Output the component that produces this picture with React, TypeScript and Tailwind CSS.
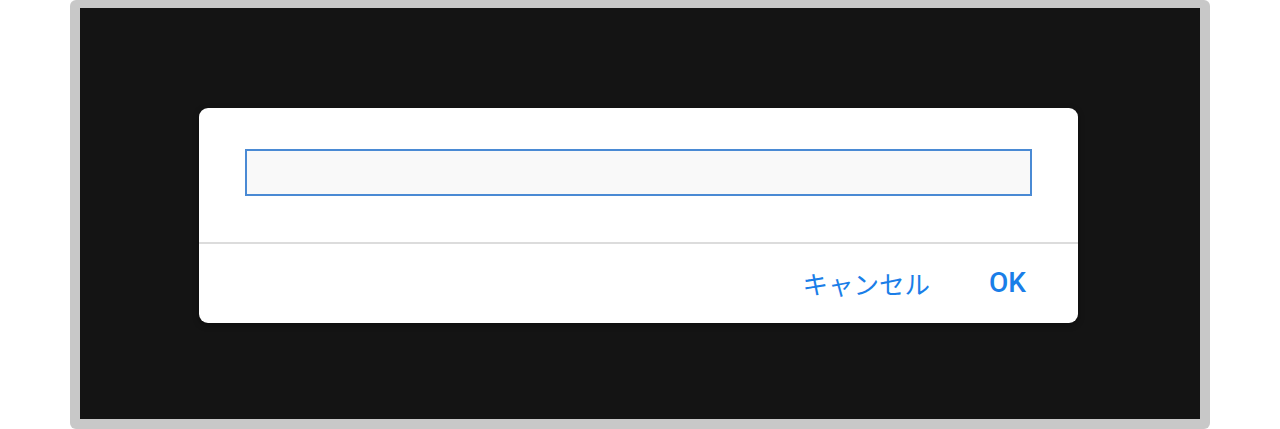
export default function App() {
  return (
    <div className="h-[429px] w-[1280px] bg-white">
      <div className="ml-[70px] h-[429px] w-[1140px] rounded-[6px] bg-[#c8c8c8] px-[10px] pt-[8px] pb-[10px]">
        <div className="flex h-full w-full items-center justify-center bg-[#141414]">
          <div className="mt-[3px] mr-[3px] w-[879px] rounded-[9px] bg-white shadow-[0_2px_6px_rgba(0,0,0,0.35)]">
            <div className="px-[46px] pt-[41px] pb-[46px]">
              <input
                type="text"
                className="block h-[47px] w-full border-2 border-[#4a8ad4] bg-[#f9f9f9] outline-none"
              />
            </div>
            <div className="h-[2px] bg-[#dcdcdc]" />
            <div
              className="flex h-[79px] items-center justify-end gap-[59px] pr-[52px] text-[#1a7ee8]"
              style={{ fontFamily: 'Roboto, "Noto Sans CJK JP", sans-serif' }}
            >
              <button
                type="button"
                className="text-[25.5px] leading-none"
                style={{ fontFamily: '"Noto Sans CJK JP", sans-serif' }}
              >
                キャンセル
              </button>
              <button type="button" className="text-[28px] font-medium leading-none">
                OK
              </button>
            </div>
          </div>
        </div>
      </div>
    </div>
  );
}
